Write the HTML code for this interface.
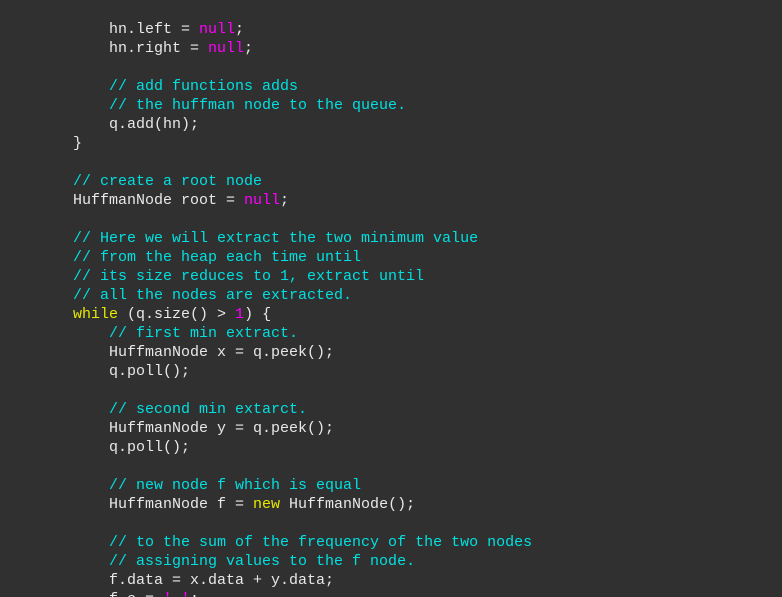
<!DOCTYPE html>
<html><head><meta charset="utf-8"><style>
html,body{margin:0;padding:0;background:#303030;width:782px;height:597px;overflow:hidden}
pre{margin:0;padding:20px 0 0 73px;font-family:"Liberation Mono",monospace;font-size:15px;line-height:19px;color:#e8e8e8}
.c{color:#00e0e0}.k{color:#e8e800}.n{color:#ff00ff}
</style></head><body><pre>    hn.left = <span class="n">null</span>;
    hn.right = <span class="n">null</span>;

    <span class="c">// add functions adds</span>
    <span class="c">// the huffman node to the queue.</span>
    q.add(hn);
}

<span class="c">// create a root node</span>
HuffmanNode root = <span class="n">null</span>;

<span class="c">// Here we will extract the two minimum value</span>
<span class="c">// from the heap each time until</span>
<span class="c">// its size reduces to 1, extract until</span>
<span class="c">// all the nodes are extracted.</span>
<span class="k">while</span> (q.size() &gt; <span class="n">1</span>) {
    <span class="c">// first min extract.</span>
    HuffmanNode x = q.peek();
    q.poll();

    <span class="c">// second min extarct.</span>
    HuffmanNode y = q.peek();
    q.poll();

    <span class="c">// new node f which is equal</span>
    HuffmanNode f = <span class="k">new</span> HuffmanNode();

    <span class="c">// to the sum of the frequency of the two nodes</span>
    <span class="c">// assigning values to the f node.</span>
    f.data = x.data + y.data;
    f.c = <span class="n">'-'</span>;
</pre></body></html>
